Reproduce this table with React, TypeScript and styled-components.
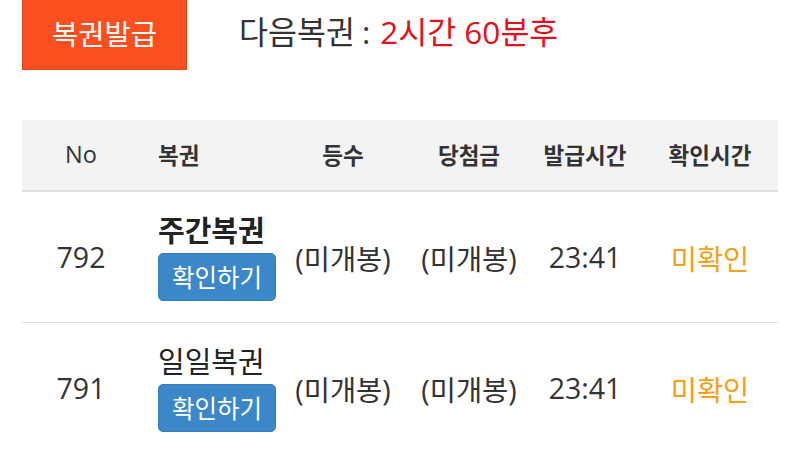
import React from "react";
import styled, { createGlobalStyle } from "styled-components";

const Global = createGlobalStyle`
  html, body { margin: 0; padding: 0; background: #fff; }
  body {
    font-family: "Open Sans", "Noto Sans CJK KR", sans-serif;
    color: #333;
    width: 800px;
    height: 452px;
    overflow: hidden;
  }
`;

const Page = styled.div`
  padding: 0 22px;
`;

const TopBar = styled.div`
  display: flex;
  align-items: center;
  gap: 52px;
  height: 70px;
`;

const IssueButton = styled.button`
  width: 165px;
  height: 71px;
  margin-top: -1px;
  background: #fb4f1f;
  border: 1px solid #d9461c;
  color: #fff;
  font-family: "Noto Sans CJK KR", sans-serif;
  font-size: 28.5px;
  padding: 0 0 4px;
  cursor: pointer;
`;

const NextInfo = styled.div`
  font-family: "Open Sans", "Noto Sans CJK KR", sans-serif;
  font-size: 31.5px;
  color: #333;
  margin-top: -10px;
  white-space: nowrap;
`;

const Colon = styled.span`
  margin: 0 10px 0 7px;
`;

const Red = styled.span`
  color: #e0131b;
`;

const Table = styled.div`
  margin-top: 50px;
  width: 756px;
`;

const cols = "118px 150px 106px 142px 94px 146px";

const HeadRow = styled.div`
  display: grid;
  grid-template-columns: ${cols};
  height: 70px;
  background: #f3f3f3;
  border-bottom: 2px solid #dedede;
  align-items: center;
`;

const BodyRow = styled.div`
  display: grid;
  grid-template-columns: ${cols};
  height: 130px;
  border-bottom: 1px solid #dedede;
  align-items: center;
`;

const HeadCell = styled.div<{ $left?: boolean; $regular?: boolean; $shift?: number }>`
  font-size: ${(p) => (p.$regular ? 23.5 : 22.5)}px;
  font-weight: ${(p) => (p.$regular ? 400 : 700)};
  color: #333;
  text-align: ${(p) => (p.$left ? "left" : "center")};
  padding-left: ${(p) => (p.$left ? 18 : p.$shift || 0)}px;
  white-space: nowrap;
  padding-bottom: 2px;
`;

const Cell = styled.div<{ $shift?: number; $color?: string }>`
  font-size: 28.5px;
  color: ${(p) => p.$color || "#333"};
  text-align: center;
  padding-left: ${(p) => p.$shift || 0}px;
  white-space: nowrap;
`;

const NameCell = styled.div`
  padding-left: 18px;
  display: flex;
  flex-direction: column;
  align-items: flex-start;
  gap: 4px;
`;

const Title = styled.div<{ $bold?: boolean }>`
  font-size: 29px;
  line-height: 36px;
  font-weight: ${(p) => (p.$bold ? 700 : 400)};
  color: #222;
  white-space: nowrap;
`;

const CheckButton = styled.button`
  width: 118px;
  height: 48px;
  background: #3c87c9;
  border: 1px solid #357ebd;
  border-radius: 5px;
  color: #fff;
  font-family: "Noto Sans CJK KR", sans-serif;
  font-size: 24.5px;
  padding: 0 0 2px;
  cursor: pointer;
`;

const rows = [
  { no: "792", name: "주간복권", bold: true },
  { no: "791", name: "일일복권", bold: false },
];

export default function App() {
  return (
    <>
      <Global />
      <Page>
        <TopBar>
          <IssueButton>복권발급</IssueButton>
          <NextInfo>
            다음복권<Colon>:</Colon>
            <Red>2시간 60분후</Red>
          </NextInfo>
        </TopBar>
        <Table>
          <HeadRow>
            <HeadCell $regular>No</HeadCell>
            <HeadCell $left>복권</HeadCell>
            <HeadCell>등수</HeadCell>
            <HeadCell $shift={4}>당첨금</HeadCell>
            <HeadCell>발급시간</HeadCell>
            <HeadCell $shift={10}>확인시간</HeadCell>
          </HeadRow>
          {rows.map((r) => (
            <BodyRow key={r.no}>
              <Cell>{r.no}</Cell>
              <NameCell>
                <Title $bold={r.bold}>{r.name}</Title>
                <CheckButton>확인하기</CheckButton>
              </NameCell>
              <Cell>(미개봉)</Cell>
              <Cell $shift={4}>(미개봉)</Cell>
              <Cell>23:41</Cell>
              <Cell $shift={10} $color="#f5a01a">미확인</Cell>
            </BodyRow>
          ))}
        </Table>
      </Page>
    </>
  );
}
